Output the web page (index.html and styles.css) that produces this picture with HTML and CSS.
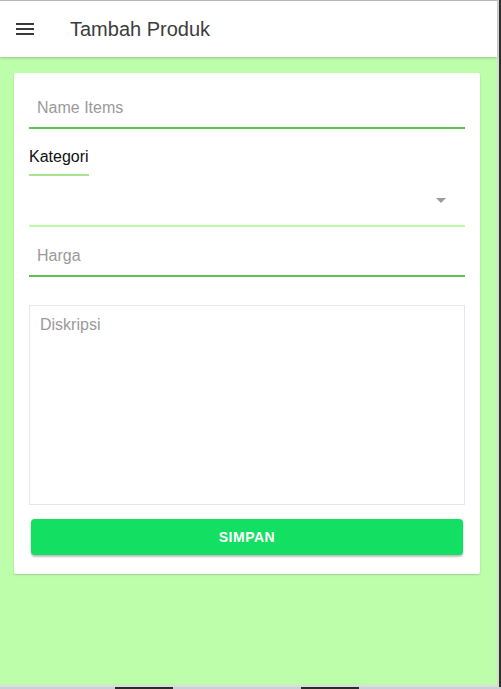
FILE: index.html
```html
<!DOCTYPE html>
<html lang="id">
<head>
<meta charset="utf-8">
<title>Tambah Produk</title>
<link rel="stylesheet" href="styles.css">
</head>
<body>
<div class="screen">
  <div class="app">
    <header class="toolbar">
      <button class="menu-btn" aria-label="Menu">
        <svg viewBox="0 0 24 24" width="24" height="24"><path d="M3 18h18v-2H3v2zm0-5h18v-2H3v2zm0-7v2h18V6H3z" fill="#3a3a3a"/></svg>
      </button>
      <h1 class="title">Tambah Produk</h1>
    </header>
    <main class="content">
      <form class="card">
        <input class="field" type="text" placeholder="Name Items">
        <div class="label-row"><span class="tab-label">Kategori</span></div>
        <div class="select"><span class="arrow"></span></div>
        <input class="field field-harga" type="text" placeholder="Harga">
        <textarea class="area" placeholder="Diskripsi"></textarea>
        <button class="save" type="button">SIMPAN</button>
      </form>
    </main>
  </div>
</div>
<div class="taskbar">
  <span class="seg light s1"></span>
  <span class="seg dark s2"></span>
  <span class="seg light s3"></span>
  <span class="seg dark s4"></span>
  <span class="seg light s5"></span>
</div>
</body>
</html>
```

FILE: styles.css
```css
* { box-sizing: border-box; }
html, body { margin: 0; padding: 0; }
body {
  width: 501px;
  height: 689px;
  overflow: hidden;
  background: #2f2f2f;
  font-family: "Liberation Sans", Arial, sans-serif;
}
.screen {
  display: flex;
  height: 687px;
}
.app {
  width: 499px;
  height: 687px;
  border-top: 1px solid #bdbdbd;
  border-right: 2px solid #d9d9d9;
  border-bottom: 2px solid #dcdcdc;
  display: flex;
  flex-direction: column;
  background: #bcfea9;
}
.toolbar {
  height: 56px;
  flex: none;
  background: #ffffff;
  display: flex;
  align-items: center;
  box-shadow: 0 1px 3px rgba(0, 0, 0, 0.22);
  position: relative;
  z-index: 1;
}
.menu-btn {
  width: 24px;
  height: 24px;
  margin-left: 13px;
  padding: 0;
  border: 0;
  background: none;
  display: flex;
}
.title {
  margin: 0 0 0 33px;
  font-size: 20px;
  font-weight: normal;
  color: #3c3c3c;
}
.content {
  flex: 1;
  padding: 16px 17px 0 14px;
}
.card {
  background: #ffffff;
  border-radius: 2px;
  box-shadow: 0 1px 2px rgba(0, 0, 0, 0.18);
  padding: 15px 15px 19px;
  display: flex;
  flex-direction: column;
}
.field {
  display: block;
  width: 100%;
  height: 41px;
  border: 0;
  border-bottom: 2px solid #5fc44c;
  padding: 0 8px;
  font-family: "Liberation Sans", Arial, sans-serif;
  font-size: 16px;
  color: #222;
  outline: none;
  background: transparent;
}
.field::placeholder, .area::placeholder { color: #9a9a9a; }
.label-row {
  display: flex;
  margin-top: 19px;
}
.tab-label {
  font-size: 16px;
  line-height: 18px;
  color: #111;
  padding-bottom: 8px;
  border-bottom: 2px solid #a7e494;
}
.select {
  height: 51px;
  border-bottom: 2px solid #bbfaa6;
  display: flex;
  align-items: center;
  justify-content: flex-end;
  padding-right: 19px;
}
.arrow {
  width: 0;
  height: 0;
  border-left: 5px solid transparent;
  border-right: 5px solid transparent;
  border-top: 5px solid #9c9c9c;
}
.field-harga { margin-top: 9px; }
.area {
  display: block;
  width: 100%;
  height: 200px;
  margin-top: 28px;
  border: 1px solid #e7e7e7;
  padding: 10px 10px 7px;
  resize: none;
  font-family: "Liberation Sans", Arial, sans-serif;
  font-size: 16px;
  outline: none;
}
.save {
  margin: 14px 2px 0;
  height: 36px;
  border: 0;
  border-radius: 4px;
  background: #13df62;
  color: #ffffff;
  font-family: "Liberation Sans", Arial, sans-serif;
  font-weight: bold;
  font-size: 14px;
  letter-spacing: 0.5px;
  box-shadow: 0 2px 2px rgba(0, 0, 0, 0.24), 0 0 2px rgba(0, 0, 0, 0.12);
}
.taskbar {
  display: flex;
  height: 2px;
}
.seg { height: 2px; }
.seg.light { background: #c9d0d9; }
.seg.dark { background: #2a2a2a; }
.s1 { width: 115px; }
.s2 { width: 58px; }
.s3 { width: 128px; }
.s4 { width: 58px; }
.s5 { flex: 1; }
```
